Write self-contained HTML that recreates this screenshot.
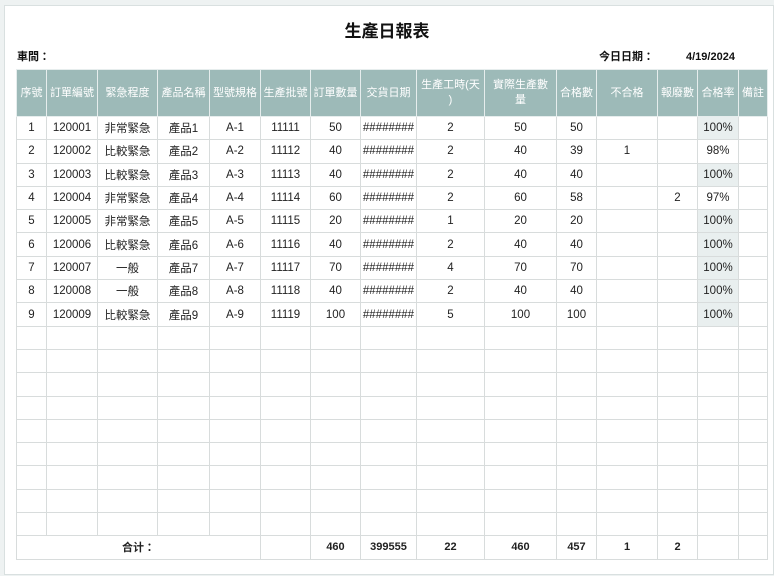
<!DOCTYPE html>
<html><head><meta charset="utf-8"><style>
*{margin:0;padding:0;box-sizing:border-box}
body{width:774px;height:576px;background:#eef2f2;font-family:"Liberation Sans","Noto Sans CJK TC",sans-serif;position:relative;overflow:hidden}
.frame{position:absolute;left:4px;top:5px;width:770px;height:570px;background:#fff;border:1px solid #d9e0e0}
.title{position:absolute;left:0;width:774px;top:17px;text-align:center;font-size:17px;font-weight:bold;color:#111}
.lbl{position:absolute;top:50px;height:14px;line-height:14px;font-size:11px;font-weight:bold;color:#111}
table{position:absolute;left:16px;top:69px;border-collapse:collapse;table-layout:fixed;font-size:11.5px;color:#222}
td,th{border:1px solid #d8dcdc;text-align:center;height:23.3px;padding:0;white-space:nowrap;overflow:hidden}
th{background:#9dbab8;color:#fff;font-weight:normal;height:47px;border-color:#e6eded;font-size:11px;line-height:15px}
td.p{background:#e9efef}
tr.t td{font-weight:bold;font-size:11px}
</style></head><body>
<div class="frame"></div>
<div class="title">生產日報表</div>
<div class="lbl" style="left:17px">車間：</div>
<div class="lbl" style="left:599px">今日日期：</div>
<div class="lbl" style="left:686px">4/19/2024</div>
<table>
<colgroup><col style="width:30px"><col style="width:51px"><col style="width:60px"><col style="width:52px"><col style="width:51px"><col style="width:50px"><col style="width:50px"><col style="width:56px"><col style="width:68px"><col style="width:72px"><col style="width:40px"><col style="width:61px"><col style="width:40px"><col style="width:41px"><col style="width:29px"></colgroup>
<tr><th>序號</th><th>訂單編號</th><th>緊急程度</th><th>產品名稱</th><th>型號規格</th><th>生產批號</th><th>訂單數量</th><th>交貨日期</th><th>生產工時(天<br>)</th><th>實際生產數<br>量</th><th>合格數</th><th>不合格</th><th>報廢數</th><th>合格率</th><th>備註</th></tr>
<tr><td>1</td><td>120001</td><td>非常緊急</td><td>產品1</td><td>A-1</td><td>11111</td><td>50</td><td>########</td><td>2</td><td>50</td><td>50</td><td></td><td></td><td class="p">100%</td><td></td></tr>
<tr><td>2</td><td>120002</td><td>比較緊急</td><td>產品2</td><td>A-2</td><td>11112</td><td>40</td><td>########</td><td>2</td><td>40</td><td>39</td><td>1</td><td></td><td>98%</td><td></td></tr>
<tr><td>3</td><td>120003</td><td>比較緊急</td><td>產品3</td><td>A-3</td><td>11113</td><td>40</td><td>########</td><td>2</td><td>40</td><td>40</td><td></td><td></td><td class="p">100%</td><td></td></tr>
<tr><td>4</td><td>120004</td><td>非常緊急</td><td>產品4</td><td>A-4</td><td>11114</td><td>60</td><td>########</td><td>2</td><td>60</td><td>58</td><td></td><td>2</td><td>97%</td><td></td></tr>
<tr><td>5</td><td>120005</td><td>非常緊急</td><td>產品5</td><td>A-5</td><td>11115</td><td>20</td><td>########</td><td>1</td><td>20</td><td>20</td><td></td><td></td><td class="p">100%</td><td></td></tr>
<tr><td>6</td><td>120006</td><td>比較緊急</td><td>產品6</td><td>A-6</td><td>11116</td><td>40</td><td>########</td><td>2</td><td>40</td><td>40</td><td></td><td></td><td class="p">100%</td><td></td></tr>
<tr><td>7</td><td>120007</td><td>一般</td><td>產品7</td><td>A-7</td><td>11117</td><td>70</td><td>########</td><td>4</td><td>70</td><td>70</td><td></td><td></td><td class="p">100%</td><td></td></tr>
<tr><td>8</td><td>120008</td><td>一般</td><td>產品8</td><td>A-8</td><td>11118</td><td>40</td><td>########</td><td>2</td><td>40</td><td>40</td><td></td><td></td><td class="p">100%</td><td></td></tr>
<tr><td>9</td><td>120009</td><td>比較緊急</td><td>產品9</td><td>A-9</td><td>11119</td><td>100</td><td>########</td><td>5</td><td>100</td><td>100</td><td></td><td></td><td class="p">100%</td><td></td></tr>
<tr><td></td><td></td><td></td><td></td><td></td><td></td><td></td><td></td><td></td><td></td><td></td><td></td><td></td><td></td><td></td></tr>
<tr><td></td><td></td><td></td><td></td><td></td><td></td><td></td><td></td><td></td><td></td><td></td><td></td><td></td><td></td><td></td></tr>
<tr><td></td><td></td><td></td><td></td><td></td><td></td><td></td><td></td><td></td><td></td><td></td><td></td><td></td><td></td><td></td></tr>
<tr><td></td><td></td><td></td><td></td><td></td><td></td><td></td><td></td><td></td><td></td><td></td><td></td><td></td><td></td><td></td></tr>
<tr><td></td><td></td><td></td><td></td><td></td><td></td><td></td><td></td><td></td><td></td><td></td><td></td><td></td><td></td><td></td></tr>
<tr><td></td><td></td><td></td><td></td><td></td><td></td><td></td><td></td><td></td><td></td><td></td><td></td><td></td><td></td><td></td></tr>
<tr><td></td><td></td><td></td><td></td><td></td><td></td><td></td><td></td><td></td><td></td><td></td><td></td><td></td><td></td><td></td></tr>
<tr><td></td><td></td><td></td><td></td><td></td><td></td><td></td><td></td><td></td><td></td><td></td><td></td><td></td><td></td><td></td></tr>
<tr><td></td><td></td><td></td><td></td><td></td><td></td><td></td><td></td><td></td><td></td><td></td><td></td><td></td><td></td><td></td></tr>
<tr class="t"><td colspan="5">合计：</td><td></td><td>460</td><td>399555</td><td>22</td><td>460</td><td>457</td><td>1</td><td>2</td><td></td><td></td></tr>
</table>
</body></html>
